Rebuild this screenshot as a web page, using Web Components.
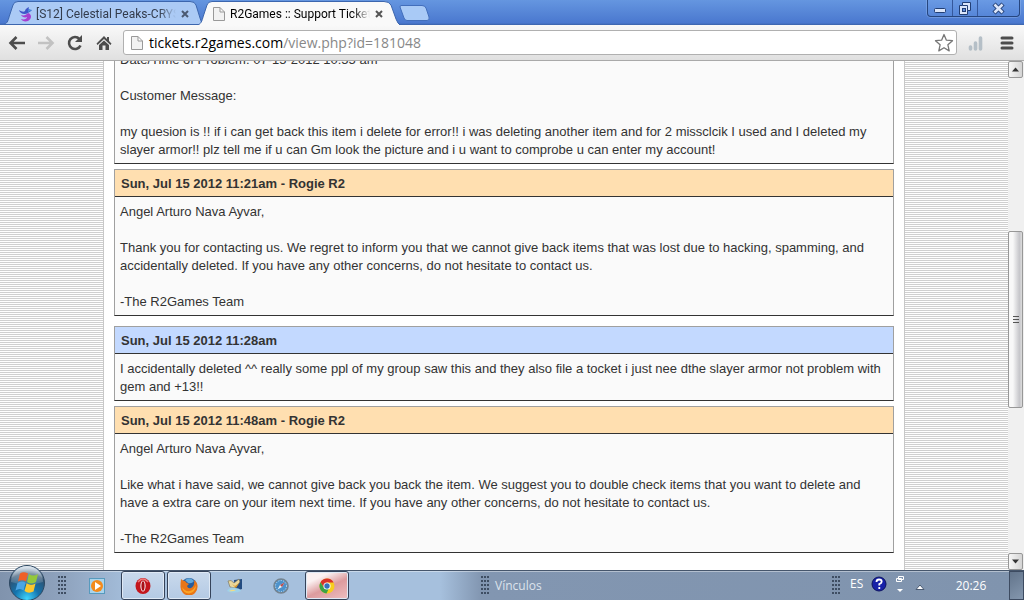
<!DOCTYPE html>
<html lang="es">
<head>
<meta charset="utf-8">
<title>R2Games :: Support Tickets</title>
<style>
    html, body { margin: 0; height: 100%; overflow: hidden; }
</style>
</head>
<body>
<desktop-screen>
    <browser-tabs slot="top"></browser-tabs>
    <browser-toolbar slot="top"></browser-toolbar>
    <ticket-view slot="page">
        <ticket-message>
            <p>Date/Time of Problem: 07-15-2012 10:55 am</p>
            <p>Customer Message:</p>
            <p>my quesion is !! if i can get back this item i delete for error!! i was deleting another item and for 2 missclcik I used and I deleted my slayer armor!! plz tell me if u can Gm look the picture and i u want to comprobe u can enter my account!</p>
        </ticket-message>
        <ticket-message kind="staff" stamp="Sun, Jul 15 2012 11:21am - Rogie R2">
            <p>Angel Arturo Nava Ayvar,</p>
            <p>Thank you for contacting us. We regret to inform you that we cannot give back items that was lost due to hacking, spamming, and accidentally deleted. If you have any other concerns, do not hesitate to contact us.</p>
            <p>-The R2Games Team</p>
        </ticket-message>
        <ticket-message kind="client" stamp="Sun, Jul 15 2012 11:28am">
            <p>I accidentally deleted ^^ really some ppl of my group saw this and they also file a tocket i just nee dthe slayer armor not problem with gem and +13!!</p>
        </ticket-message>
        <ticket-message kind="staff" stamp="Sun, Jul 15 2012 11:48am - Rogie R2">
            <p>Angel Arturo Nava Ayvar,</p>
            <p>Like what i have said, we cannot give back you back the item. We suggest you to double check items that you want to delete and have a extra care on your item next time. If you have any other concerns, do not hesitate to contact us.</p>
            <p>-The R2Games Team</p>
        </ticket-message>
    </ticket-view>
    <scroll-bar slot="page"></scroll-bar>
    <task-bar slot="bottom"></task-bar>
</desktop-screen>

<script>
/**
 * Base element: puts the markup returned by render() into an open shadow root
 */
class baseElement extends HTMLElement {
    constructor() {
        super();
        this._shadowDOM = this.attachShadow({mode: 'open'});
    }
    connectedCallback() {
        this._shadowDOM.innerHTML = this.render();
    }
}

class desktopScreen extends baseElement {
    render() {
        return `
            <style>
                :host {
                    display: flex;
                    flex-direction: column;
                    height: 100vh;
                    overflow: hidden;
                    background: #fff;
                }
                main {
                    flex: 1;
                    min-height: 0;
                    display: flex;
                    overflow: hidden;
                }
            </style>
            <slot name="top"></slot>
            <main><slot name="page"></slot></main>
            <slot name="bottom"></slot>
        `;
    }
}

class browserTabs extends baseElement {
    render() {
        return `
            <style>
                :host {
                    display: flex;
                    height: 25px;
                    background: linear-gradient(#6596e0, #4a78cf 23px, #3a62a8);
                    font: 12px Roboto, "Noto Sans", sans-serif;
                }
                .tabs { display: flex; flex: 1; padding-left: 4px; }
                .tab {
                    position: relative;
                    display: flex;
                    align-items: center;
                    box-sizing: border-box;
                    width: 198px;
                    height: 25px;
                    padding: 2px 8px 0 14px;
                    color: #333c4c;
                }
                .tab.active { width: 202px; color: #000; margin-left: -4px; padding-right: 12px; }
                .shape { position: absolute; inset: 0; width: 100%; height: 100%; }
                .icon, .tab span, .tab button { position: relative; }
                .icon { flex: none; margin-right: 2px; }
                .active .icon { margin-right: 4px; }
                .tab span {
                    flex: 1;
                    overflow: hidden;
                    white-space: nowrap;
                    -webkit-mask-image: linear-gradient(90deg, #000 88%, transparent);
                    mask-image: linear-gradient(90deg, #000 88%, transparent);
                }
                button { border: 0; padding: 0; background: none; display: block; }
                button svg { display: block; margin: 0 auto; }
                .tab button { width: 18px; height: 16px; }
                .plus { height: 25px; margin-left: -3px; }
                .win {
                    display: flex;
                    height: 17px;
                    margin-right: 4px;
                    border: 1px solid #26467f;
                    border-top: 0;
                    border-radius: 0 0 4px 4px;
                    box-sizing: border-box;
                    background: linear-gradient(#6a9ae4, #5686d8);
                    box-shadow: 0 0 0 1px rgba(150,185,240,0.4);
                }
                .win button { width: 25px; border-right: 1px solid #35589c; }
                .win button:last-child { width: 41px; border: 0; }
            </style>
            <div class="tabs">
                <div class="tab">
                    <svg class="shape" viewBox="0 0 198 25" preserveAspectRatio="none">
                        <path d="M0 24.500C4 23 4 20 6 14L9 5Q10 1.500 14 1.500H186Q191 1.500 192 5L196 18Q198 23 198 24.500Z" fill="#abcaf5" stroke="#3c66ae"/>
                    </svg>
                    <svg class="icon" width="16" height="16" viewBox="0 0 16 16">
                        <path d="M1 4C4 6 6 6 7 5C7 3 9 2 11 1C10 3 11 4 14 4C12 6 11 6 10 7C7 9 2 8 1 4Z" fill="#3f57c9"/>
                        <path d="M3 9C6 10 8 9 10 7C14 8 14 13 10 15C7 16 4 15 3 13C6 14 9 13 9 11C7 12 4 11 3 9Z" fill="#a63fd0"/>
                        <path d="M11 1C10 3 11 4 14 4L10 6Z" fill="#4999dc"/>
                    </svg>
                    <span>[S12] Celestial Peaks-CRYSTAL</span>
                    <button aria-label="Cerrar"><svg width="8" height="8" viewBox="0 0 8 8"><path d="M1 1L7 7M7 1L1 7" stroke="#4b5a72" stroke-width="2"/></svg></button>
                </div>
                <div class="tab active">
                    <svg class="shape" viewBox="0 0 202 25" preserveAspectRatio="none">
                        <path d="M0 25C4 23 4 20 6 14L9 5Q10 1.500 14 1.500H186Q191 1.500 193 5L198 19Q200 24 202 25Z" fill="#f9f9f9"/>
                        <path d="M0 25C4 23 4 20 6 14L9 5Q10 1.500 14 1.500H186Q191 1.500 193 5L198 19Q200 24 202 25" fill="none" stroke="#3c66ae"/>
                    </svg>
                    <svg class="icon" width="14" height="16" viewBox="0 0 14 16"><path d="M1.500 1.500H8L12.500 6V14.500H1.500ZM8 1.500V6H12.500" fill="#f2f2f2" stroke="#999"/></svg>
                    <span>R2Games :: Support Tickets</span>
                    <button aria-label="Cerrar"><svg width="8" height="8" viewBox="0 0 8 8"><path d="M1 1L7 7M7 1L1 7" stroke="#555" stroke-width="2"/></svg></button>
                </div>
                <button class="plus" aria-label="Nueva pestaña"><svg width="34" height="25" viewBox="0 0 34 25"><path d="M4 5.500H25Q28 5.500 29 8L32 17Q33 20.500 30 20.500H10Q8 20.500 7 18L3 7Q3 5.500 4 5.500Z" fill="#a9caf6" stroke="#426ebb"/></svg></button>
            </div>
            <div class="win">
                <button aria-label="Minimizar"><svg width="14" height="16" viewBox="0 0 14 16"><rect x="1.500" y="8.500" width="11" height="4" rx="1" fill="#dbe6fa" stroke="#223f75"/></svg></button>
                <button aria-label="Restaurar"><svg width="14" height="16" viewBox="0 0 14 16"><path d="M4.500 2.500H12.500V10.500H9.500V14.500H1.500V5.500H4.500Z" fill="#dbe6fa" stroke="#223f75"/><path d="M4.500 5.500H9.500V10.500" fill="none" stroke="#223f75"/><rect x="4.500" y="8.500" width="3" height="3" fill="#6391df" stroke="#223f75"/></svg></button>
                <button aria-label="Cerrar ventana"><svg width="14" height="16" viewBox="0 0 14 16"><path d="M2 4L11 13M11 4L2 13" stroke="#223f75" stroke-width="4.500"/><path d="M2.500 4.500L10.500 12.500M10.500 4.500L2.500 12.500" stroke="#dbe6fa" stroke-width="2.500"/></svg></button>
            </div>
        `;
    }
}

class browserToolbar extends baseElement {
    render() {
        return `
            <style>
                :host {
                    display: flex;
                    align-items: center;
                    box-sizing: border-box;
                    height: 36px;
                    padding: 0 0 0 2px;
                    background: linear-gradient(#f9f9f9, #e0e0e0);
                    border-bottom: 1px solid #a9a9a9;
                }
                button { border: 0; padding: 0; background: none; width: 29px; height: 28px; flex: none; }
                svg { display: block; margin: 0 auto; flex: none; }
                .address {
                    display: flex;
                    align-items: center;
                    flex: 1;
                    height: 25px;
                    box-sizing: border-box;
                    margin: 0 4px 0 5px;
                    padding-left: 6px;
                    border: 1px solid #b0b0b0;
                    border-radius: 3px;
                    background: #fff;
                }
                .address > svg { margin: 0; }
                a {
                    flex: 1;
                    padding-left: 5px;
                    font: 14px/20px "Open Sans", "Noto Sans", sans-serif;
                    color: #888;
                    text-decoration: none;
                }
                a b { font-weight: normal; color: #000; }
                .address button { width: 24px; }
                .menu { width: 34px; }
            </style>
            <button aria-label="Atrás"><svg width="18" height="16" viewBox="0 0 18 16"><path d="M17 8H3M8.500 2L2.500 8L8.500 14" fill="none" stroke="#4d4d4d" stroke-width="2.600"/></svg></button>
            <button aria-label="Adelante"><svg width="18" height="16" viewBox="0 0 18 16"><path d="M1 8H15M9.500 2L15.500 8L9.500 14" fill="none" stroke="#c2c2c2" stroke-width="2.600"/></svg></button>
            <button aria-label="Recargar"><svg width="18" height="18" viewBox="0 0 18 18"><path d="M13.500 5A6 6 0 1 0 14.500 11.500" fill="none" stroke="#4d4d4d" stroke-width="2.600"/><path d="M16 1V8H9Z" fill="#4d4d4d"/></svg></button>
            <button aria-label="Inicio"><svg width="16" height="16" viewBox="0 0 16 16"><path d="M8 1L11 4V2H13V6L15.500 8.500L14.500 10L8 4L1.500 10L.5 8.500Z" fill="#4d4d4d"/><path d="M3 10L8 5.500L13 10V15H9.500V10.500H6.500V15H3Z" fill="#4d4d4d"/></svg></button>
            <div class="address">
                <svg width="14" height="16" viewBox="0 0 14 16"><path d="M1.500 1.500H8L12.500 6V14.500H1.500ZM8 1.500V6H12.500" fill="#f2f2f2" stroke="#999"/></svg>
                <a href="#ticket"><b>tickets.r2games.com</b>/view.php?id=181048</a>
                <button aria-label="Marcador"><svg width="20" height="20" viewBox="0 0 20 20"><path d="M10 1.500L12.400 7.200L18.500 7.700L13.900 11.800L15.200 17.900L10 14.700L4.800 17.900L6.100 11.800L1.500 7.700L7.600 7.200Z" fill="#fff" stroke="#777" stroke-width="1.300" stroke-linejoin="round"/></svg></button>
            </div>
            <button aria-label="Señal"><svg width="16" height="16" viewBox="0 0 16 16"><path d="M2.500 14V12M7.500 14V8M12.500 14V3" stroke="#b5bfc7" stroke-width="3.600" stroke-linecap="round"/></svg></button>
            <button class="menu" aria-label="Menú"><svg width="14" height="14" viewBox="0 0 14 14"><path d="M2 2H12M2 7H12M2 12H12" stroke="#4d4d4d" stroke-width="3" stroke-linecap="round"/></svg></button>
        `;
    }
}

class ticketView extends baseElement {
    render() {
        return `
            <style>
                :host {
                    flex: 1;
                    min-width: 0;
                    display: flex;
                    flex-direction: column;
                    justify-content: flex-end;
                    background: repeating-linear-gradient(#fff 0 1px, #d0d0d0 1px 2px);
                }
                .sheet {
                    display: flex;
                    flex-direction: column;
                    width: 780px;
                    margin: 0 auto;
                    padding: 0 10px 17px;
                    border: solid #c8c8c8;
                    border-width: 0 1px;
                    background: #fff;
                }
            </style>
            <div class="sheet"><slot></slot></div>
        `;
    }
}

class ticketMessage extends baseElement {
    render() {
        let stamp = this.getAttribute('stamp');
        return `
            <style>
                :host {
                    display: block;
                    margin-bottom: 5px;
                    border: 1px solid #a0a0a0;
                    border-bottom-color: #333;
                    background: #fafafa;
                    color: #333;
                    font: 13px/18px "Liberation Sans", Arial, sans-serif;
                }
                :host([kind=staff]) { margin-bottom: 10px; }
                :host(:last-of-type) { margin-bottom: 0; }
                h2 {
                    margin: 0;
                    padding: 5px 6px 3px;
                    border-bottom: 1px solid #333;
                    font-size: 13px;
                    line-height: 18px;
                    background: #ffdfb0;
                }
                :host([kind=client]) h2 { background: #c3d9ff; }
                .body { padding: 6px 5px 4px; }
                ::slotted(p) { margin: 0 0 18px; }
                ::slotted(p:last-child) { margin: 0; }
            </style>
            ${stamp ? `<h2>${stamp}</h2>` : ''}
            <div class="body"><slot></slot></div>
        `;
    }
}

class scrollBar extends baseElement {
    render() {
        return `
            <style>
                :host {
                    display: flex;
                    flex-direction: column;
                    width: 16px;
                    background: #f0f0f0;
                }
                button {
                    box-sizing: border-box;
                    width: 15px;
                    height: 17px;
                    padding: 0;
                    border: 1px solid #979797;
                    border-radius: 2px;
                    background: linear-gradient(90deg, #f6f6f6, #d4d4d4);
                }
                svg { display: block; margin: 0 auto; }
                .track { flex: 1; display: flex; flex-direction: column; }
                .before { flex: 154; }
                .after { flex: 146; }
                .thumb { flex: 176; background: linear-gradient(90deg, #f8f8f8 30%, #c6c6ca 80%, #dcdcdc); }
            </style>
            <button aria-label="Subir"><svg width="7" height="5" viewBox="0 0 7 5"><path d="M0 4.500L3.500 .5L7 4.500Z" fill="#333"/></svg></button>
            <div class="track">
                <div class="before"></div>
                <button class="thumb" aria-label="Desplazar"><svg width="8" height="9" viewBox="0 0 8 9"><path d="M1 1.500H7M1 4.500H7M1 7.500H7" stroke="#555"/></svg></button>
                <div class="after"></div>
            </div>
            <button aria-label="Bajar"><svg width="7" height="5" viewBox="0 0 7 5"><path d="M0 .5L3.500 4.500L7 .5Z" fill="#333"/></svg></button>
        `;
    }
}

class taskBar extends baseElement {
    render() {
        return `
            <style>
                :host {
                    position: relative;
                    display: flex;
                    align-items: center;
                    box-sizing: border-box;
                    height: 30px;
                    border-top: 1px solid #46566c;
                    background: linear-gradient(90deg, #8093ad, #8ea2bd 6%, #a6c0dd 13%, #a6c0dd 43%, #8296b1 47%, #8094ae);
                    box-shadow: inset 0 1px rgba(255,255,255,0.4);
                    font: 12px/16px "Open Sans", "Noto Sans", sans-serif;
                    color: #fff;
                }
                button { border: 0; padding: 0; background: none; flex: none; color: inherit; font: inherit; }
                svg { display: block; margin: 0 auto; flex: none; }
                .start { align-self: flex-end; width: 38px; margin: 0 12px 0 8px; }
                .grip {
                    width: 8px;
                    height: 20px;
                    background: radial-gradient(circle at 1px 1px, #3f4e63 1px, transparent 1px) 0 0 / 3px 4px;
                }
                .apps { display: flex; gap: 2px; flex: 1; align-self: stretch; margin-left: 9px; }
                .apps button { width: 44px; box-sizing: border-box; }
                .apps .open {
                    border: 1px solid #35435a;
                    border-radius: 3px;
                    background: linear-gradient(#c9d9ec, #b4cae4);
                    box-shadow: inset 0 0 0 1px #dfe9f5;
                }
                .apps .hot { background: linear-gradient(155deg, #fbf1f1 25%, #dd9b9e 55%, #eebfc1); }
                .links { display: flex; align-items: center; width: 351px; gap: 6px; color: #dce3ec; }
                .tray { display: flex; align-items: center; gap: 8px; padding: 0 0 4px 10px; width: 96px; }
                .tray button:last-child { margin: 6px 0 0 2px; }
                .clock { flex: none; width: 50px; text-align: center; }
                .peek { align-self: stretch; width: 15px; margin-left: 13px; box-sizing: border-box; border: 1px solid #3d4b61; background: linear-gradient(145deg, #62748b, #8497ae); }
            </style>
            <button class="start" aria-label="Inicio">
                <svg width="38" height="36" viewBox="0 0 38 36">
                    <defs>
                        <radialGradient id="orb" cx=".5" cy=".95" r=".9"><stop offset="0" stop-color="#3fd6ff"/><stop offset=".4" stop-color="#1474ae"/><stop offset=".8" stop-color="#2f506f"/><stop offset="1" stop-color="#a9c0d4"/></radialGradient>
                        <linearGradient id="shine" x2="0" y2="1"><stop offset="0" stop-color="#fff" stop-opacity=".6"/><stop offset="1" stop-color="#fff" stop-opacity=".1"/></linearGradient>
                    </defs>
                    <circle cx="19" cy="19" r="17.500" fill="url(#orb)" stroke="#2d4761"/>
                    <path d="M3 18A16 16 0 0 1 35 18Q19 23 3 18Z" fill="url(#shine)"/>
                    <path d="M12 9.500Q15.500 7 20 9.500L18 17.500Q14 15 10 17.500Z" fill="#ef6028"/>
                    <path d="M21 10Q25 13 30 10L28 18Q23 21 19 18Z" fill="#94c83c"/>
                    <path d="M9.500 19Q13.500 16 17.600 18.800L15.500 26.500Q12 23.500 7.500 26.500Z" fill="#4ba5e4"/>
                    <path d="M18.600 19.300Q22.500 22 27.500 19.500L25.500 27.500Q20.500 30 16.500 27Z" fill="#fcc72e"/>
                </svg>
            </button>
            <div class="grip"></div>
            <div class="apps">
                <button aria-label="Reproductor"><svg width="16" height="16" viewBox="0 0 16 16"><rect x=".5" y=".5" width="15" height="15" fill="#a9d4ec" stroke="#579abd"/><circle cx="8" cy="8" r="6" fill="#f38b1c"/><path d="M6 4L12 8L6 12Z" fill="#fff"/></svg></button>
                <button class="open" aria-label="Opera"><svg width="16" height="16" viewBox="0 0 16 16"><ellipse cx="8" cy="8" rx="7.500" ry="8" fill="#c3161c"/><path d="M3 4Q8-2 13 4" fill="none" stroke="#ef7b7b" stroke-width="1.500"/><ellipse cx="8" cy="8" rx="2.600" ry="5.500" fill="#fff"/><ellipse cx="8" cy="8" rx="1.600" ry="4.800" fill="#a81117"/></svg></button>
                <button class="open" aria-label="Firefox"><svg width="18" height="18" viewBox="0 0 18 18"><circle cx="9" cy="9" r="8" fill="#285d9c"/><path d="M5 3Q10-1 14 4Q12 7 8 6Z" fill="#63a9db"/><path d="M1 2Q3 4 5 4Q6 6 9 7L7 9Q8 12 11 11Q15 9 14 3Q18 6 17.500 10A8.500 8.500 0 0 1 .5 10Q.5 5 1 2Z" fill="#e87618"/><path d="M2 10Q5 15 10 14Q14 13 16 8Q16 15 9 16.500Q3 16 2 10Z" fill="#fba525"/></svg></button>
                <button aria-label="Messenger"><svg width="18" height="16" viewBox="0 0 18 16"><path d="M8 2L16 1V11L9 13Z" fill="#234b80"/><path d="M2 3Q5 1 8 5L13 1L14 4L9 10L4 9Z" fill="#e9d79b" stroke="#6d6a55" stroke-width=".6"/><path d="M6 6L9 8L13 5L10 10Z" fill="#d99a2b"/><path d="M1 13Q4 8 9 10Q14 10 15 13Q8 16 1 13Z" fill="#9fd2ea"/><path d="M3 13Q6 11 10 12Q7 14 3 13Z" fill="#f1dd86"/></svg></button>
                <button aria-label="Safari"><svg width="16" height="16" viewBox="0 0 16 16"><circle cx="8" cy="8" r="7" fill="#4d92cb" stroke="#75838f" stroke-width="1.500"/><circle cx="8" cy="8" r="5.500" fill="none" stroke="#d4e4f0" stroke-dasharray="1 1.500"/><path d="M11.500 4.500L9 9L4.500 11.500L7 7Z" fill="#e9f1f7"/><path d="M11.500 4.500L9 9L7 7Z" fill="#b94a4a"/></svg></button>
                <button class="open hot" aria-label="Chrome"><svg width="16" height="16" viewBox="0 0 16 16"><circle cx="8" cy="8" r="7.500" fill="#f7cd1f"/><path d="M1.500 4.200A7.500 7.500 0 0 1 14.600 4.500H8L5 9.700Z" fill="#d83228"/><path d="M1.500 4.200L5 9.700L9.500 11.200L7.500 15.500A7.500 7.500 0 0 1 1.500 4.200Z" fill="#3ba245"/><circle cx="8" cy="8" r="3.600" fill="#fff"/><circle cx="8" cy="8" r="2.700" fill="#3570b8"/></svg></button>
            </div>
            <div class="links"><div class="grip"></div>Vínculos</div>
            <div class="grip"></div>
            <div class="tray">
                <span>ES</span>
                <button aria-label="Ayuda"><svg width="16" height="16" viewBox="0 0 16 16"><circle cx="8" cy="8" r="7" fill="#1721a8" stroke="#0c1260"/><path d="M5.500 6Q5.500 3.500 8 3.500Q10.700 3.500 10.700 5.800Q10.700 7.300 8.300 8.200V9.500M8.300 11V13" fill="none" stroke="#fff" stroke-width="1.800"/></svg></button>
                <button aria-label="Opciones"><svg width="10" height="18" viewBox="0 0 10 18"><path d="M3.500 1.500H8.500V4.500H3.500ZM1.500 3.500H6.500V6.500H1.500Z" fill="#8094ae" stroke="#fff"/><path d="M2 14H8L5 17Z" fill="#fff"/></svg></button>
                <button aria-label="Iconos ocultos"><svg width="10" height="6" viewBox="0 0 10 6"><path d="M1 5.500L5 1L9 5.500Z" fill="#fff" stroke="#4b5b72"/></svg></button>
            </div>
            <div class="clock">20:26</div>
            <button class="peek" aria-label="Mostrar escritorio"></button>
        `;
    }
}

window.customElements.define('desktop-screen', desktopScreen);
window.customElements.define('browser-tabs', browserTabs);
window.customElements.define('browser-toolbar', browserToolbar);
window.customElements.define('ticket-view', ticketView);
window.customElements.define('ticket-message', ticketMessage);
window.customElements.define('scroll-bar', scrollBar);
window.customElements.define('task-bar', taskBar);
</script>
</body>
</html>
